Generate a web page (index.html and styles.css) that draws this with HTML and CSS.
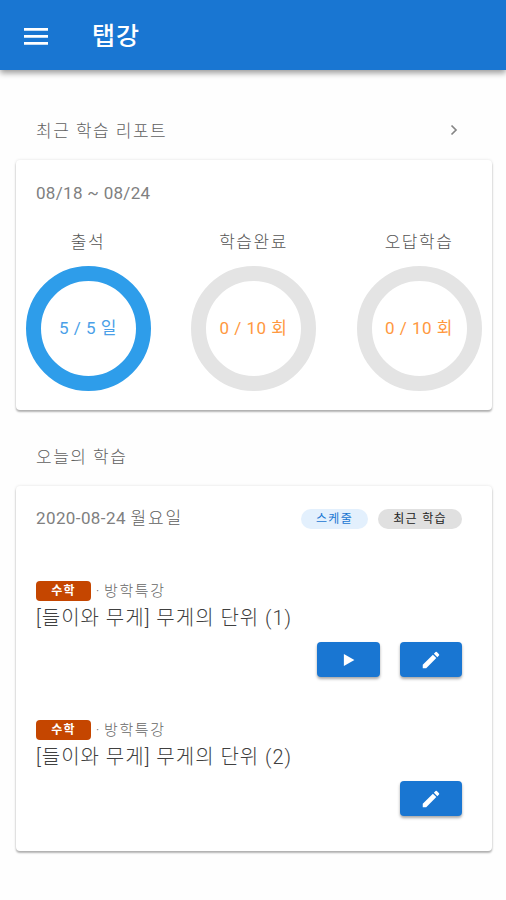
FILE: index.html
```
<!DOCTYPE html>
<html lang="ko">
<head>
<meta charset="utf-8">
<title>탭강</title>
<link rel="stylesheet" href="styles.css">
</head>
<body>
<header class="appbar">
  <svg class="menu" viewBox="0 0 24 17"><path d="M0 0h24v2.8H0zM0 7h24v2.8H0zM0 14h24v2.8H0z" fill="#fff"/></svg>
  <h1 class="brand">탭강</h1>
</header>
<main class="content">
  <div class="section-head">
    <h2 class="section-title">최근 학습 리포트</h2>
    <svg class="chevron" viewBox="0 0 8 12"><path d="M1.5 1.5 6 6 1.5 10.5" fill="none" stroke="#858585" stroke-width="1.7"/></svg>
  </div>
  <section class="card report">
    <p class="period">08/18 ~ 08/24</p>
    <div class="stats">
      <div class="stat"><span class="stat-name">출석</span><div class="ring ring-done"><span class="value">5 / 5 일</span></div></div>
      <div class="stat"><span class="stat-name">학습완료</span><div class="ring"><span class="value">0 / 10 회</span></div></div>
      <div class="stat"><span class="stat-name">오답학습</span><div class="ring"><span class="value">0 / 10 회</span></div></div>
    </div>
  </section>
  <div class="section-head today-head"><h2 class="section-title">오늘의 학습</h2></div>
  <section class="card today">
    <div class="today-top">
      <p class="date">2020-08-24 <span class="weekday">월요일</span></p>
      <div class="chips"><span class="chip chip-plan">스케줄</span><span class="chip chip-recent">최근 학습</span></div>
    </div>
    <article class="lesson">
      <div class="meta"><span class="subject">수학</span><span class="dot">·</span><span class="course">방학특강</span></div>
      <h3 class="lesson-title">[들이와 무게] 무게의 단위 (1)</h3>
      <div class="actions">
        <button class="btn"><svg class="icon" viewBox="0 0 24 24"><path d="M7.5 5.5v13l11.5-6.5z"/></svg></button>
        <button class="btn"><svg class="icon" viewBox="0 0 24 24"><path d="M3 17.25V21h3.75L17.81 9.94l-3.75-3.75zM20.71 7.04a1 1 0 0 0 0-1.41l-2.34-2.34a1 1 0 0 0-1.41 0l-1.83 1.83 3.75 3.75z"/></svg></button>
      </div>
    </article>
    <article class="lesson">
      <div class="meta"><span class="subject">수학</span><span class="dot">·</span><span class="course">방학특강</span></div>
      <h3 class="lesson-title">[들이와 무게] 무게의 단위 (2)</h3>
      <div class="actions">
        <button class="btn"><svg class="icon" viewBox="0 0 24 24"><path d="M3 17.25V21h3.75L17.81 9.94l-3.75-3.75zM20.71 7.04a1 1 0 0 0 0-1.41l-2.34-2.34a1 1 0 0 0-1.41 0l-1.83 1.83 3.75 3.75z"/></svg></button>
      </div>
    </article>
  </section>
</main>
</body>
</html>
```
FILE: styles.css
```
* { box-sizing: border-box; margin: 0; padding: 0; }
body {
  min-height: 900px;
  background: #fefefe;
  color: #808080;
  font-family: Roboto, "Noto Sans CJK KR", sans-serif;
  font-size: 17px;
  font-weight: 400;
}
h1, h2, h3 { font-weight: 400; }
svg { display: block; }
.appbar {
  display: flex;
  align-items: center;
  gap: 44px;
  height: 70px;
  padding: 2px 24px 0;
  background: #1976d2;
  box-shadow: 0 3px 6px rgba(0, 0, 0, .4);
}
.menu { width: 24px; height: 17px; }
.brand { padding-top: 2px; color: #fff; font-size: 25px; font-weight: 500; line-height: 36px; letter-spacing: .9px; }
.content { padding: 0 14px 49px 16px; }
.section-head {
  display: flex;
  align-items: center;
  justify-content: space-between;
  height: 60px;
  margin-top: 30px;
  padding: 0 34px 0 20px;
}
.section-title { padding-top: 2px; font-size: 17px; line-height: 24px; font-weight: 300; letter-spacing: 1.5px; color: #606060; }
.chevron { width: 8px; height: 12px; }
.card {
  background: #fff;
  border-radius: 4px;
  box-shadow: 0 2px 2px rgba(0, 0, 0, .28), 0 0 3px rgba(0, 0, 0, .12);
}
.report { height: 250px; }
.period { padding: 21px 20px 0; line-height: 24px; letter-spacing: .3px; }
.stats { display: flex; justify-content: space-between; padding: 24px 10.5px 0 9.5px; }
.stat { width: 125px; text-align: center; }
.stat-name { display: block; height: 26px; line-height: 26px; margin-bottom: 11px; font-weight: 300; letter-spacing: 1.5px; color: #555; }
.ring {
  display: flex;
  align-items: center;
  justify-content: center;
  width: 125px;
  height: 125px;
  border: 15px solid #e4e4e4;
  border-radius: 50%;
  color: #ff9840;
  letter-spacing: .5px;
}
.value { padding-bottom: 4px; }
.ring-done { border-color: #2e9dea; color: #4a9fe8; }
.today-head { height: 60px; margin-top: 16px; }
.today { height: 365px; padding: 20px 30px 0 20px; }
.today-top { display: flex; justify-content: space-between; height: 26px; line-height: 25px; }
.date { letter-spacing: .4px; }
.weekday { font-weight: 300; letter-spacing: 1.9px; color: #606060; }
.chips { display: flex; align-items: center; gap: 10px; }
.chip {
  height: 20px;
  border-radius: 10px;
  font-size: 12px;
  line-height: 21px;
  text-align: center;
  letter-spacing: 1.3px;
}
.chip-plan { width: 67px; background: #e3f0fd; color: #1976d2; }
.chip-recent { width: 84px; background: #e0e0e0; color: #222; }
.lesson { height: 139px; }
.today-top + .lesson { margin-top: 48px; }
.meta { display: flex; align-items: center; height: 21px; font-size: 15px; font-weight: 300; color: #666; }
.subject {
  width: 55px;
  height: 20px;
  border-radius: 4px;
  background: #c54600;
  color: #fff;
  font-size: 12px;
  font-weight: 700;
  line-height: 20px;
  text-align: center;
  letter-spacing: 1.3px;
}
.dot { width: 13px; text-align: center; }
.course { line-height: 22px; letter-spacing: 1.6px; }
.lesson-title { height: 33px; color: #404040; font-size: 20px; font-weight: 300; line-height: 35px; letter-spacing: 1px; }
.actions { display: flex; justify-content: flex-end; gap: 20px; margin-top: 8px; }
.btn {
  display: flex;
  align-items: center;
  justify-content: center;
  width: 62.5px;
  height: 35px;
  border: 0;
  border-radius: 4px;
  background: #1976d2;
  box-shadow: 0 2px 3px rgba(0, 0, 0, .35);
}
.icon { width: 22px; height: 22px; fill: #fff; }
```
